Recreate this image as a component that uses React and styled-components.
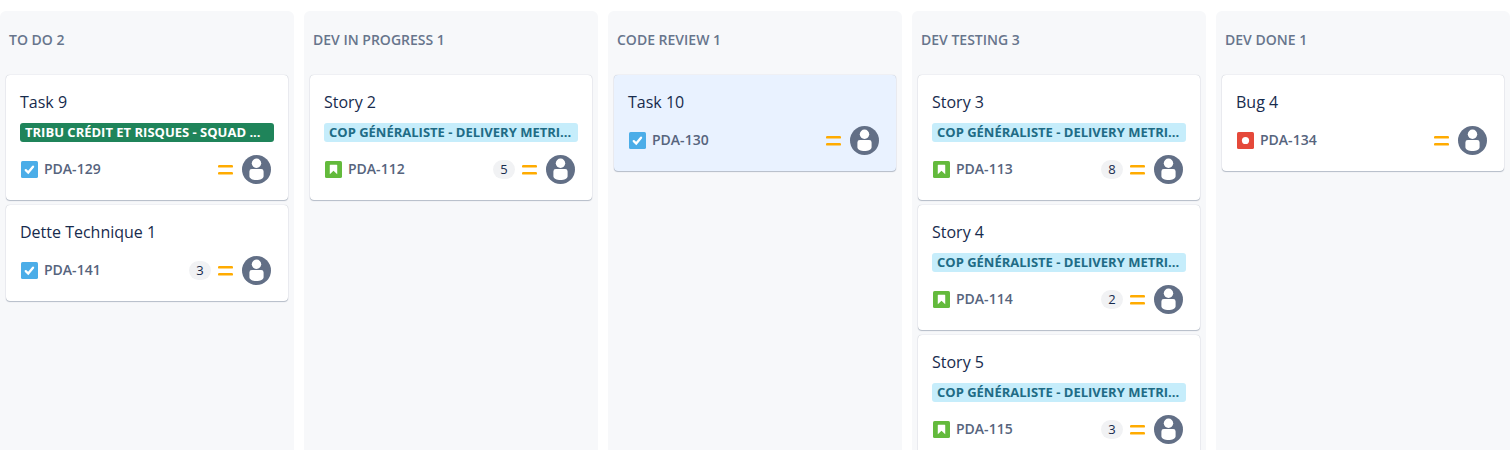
import React from "react";
import styled, { createGlobalStyle } from "styled-components";

const GlobalStyle = createGlobalStyle`
  *, *::before, *::after { box-sizing: border-box; }
  body {
    margin: 0;
    background: #ffffff;
    color: #172b4d;
    font-family: "Segoe UI", "Open Sans", "Noto Sans", sans-serif;
  }
  h2, h3, ul { margin: 0; padding: 0; }
  ul { list-style: none; }
`;

const Board = styled.main`
  display: grid;
  grid-template-columns: repeat(5, minmax(0, 1fr));
  gap: 10px;
  height: 100vh;
  padding-top: 11px;
  overflow: hidden;
`;

const Column = styled.section`
  padding: 0 6px 6px;
  border-radius: 6px 6px 0 0;
  background: #f7f8fa;
`;

const ColumnTitle = styled.h2`
  padding: 19px 3px 25px;
  font-size: 14px;
  line-height: 20px;
  font-weight: 600;
  color: #67758c;
  text-transform: uppercase;
  white-space: nowrap;
`;

const CardList = styled.ul`
  display: flex;
  flex-direction: column;
  gap: 5px;
`;

const Card = styled.li`
  display: flex;
  flex-direction: column;
  padding: 13px 14px 16px;
  border-radius: 4px;
  background: ${(p) => (p.$selected ? "#e9f2ff" : "#ffffff")};
  box-shadow: 0 1px 1px rgba(9, 30, 66, 0.25), 0 0 1px rgba(9, 30, 66, 0.31);
`;

const CardTitle = styled.h3`
  font-size: 16px;
  line-height: 28px;
  font-weight: 400;
`;

const Epic = styled.div`
  margin: 7px 0 3px;
  padding: 0 5px;
  border-radius: 3px;
  font-size: 13px;
  line-height: 19px;
  font-weight: 700;
  white-space: nowrap;
  overflow: hidden;
  background: ${(p) => (p.$tone === "green" ? "#1f845a" : "#c6edfb")};
  color: ${(p) => (p.$tone === "green" ? "#ffffff" : "#206b85")};
`;

const CardFooter = styled.div`
  display: flex;
  align-items: center;
  justify-content: space-between;
  margin-top: 10px;
  padding: 0 3px 0 1px;
`;

const Group = styled.div`
  display: flex;
  align-items: center;
  gap: ${(p) => p.$gap}px;
`;

const IssueKey = styled.a`
  padding-bottom: 2px;
  font-size: 14px;
  line-height: 20px;
  font-weight: 600;
  color: #56647d;
  text-decoration: none;
`;

const Points = styled.span`
  min-width: 22px;
  padding: 0 6px;
  border-radius: 10px;
  background: #f1f2f4;
  font-size: 13px;
  line-height: 19px;
  text-align: center;
`;

const Icon = styled.svg`
  display: block;
  flex: none;
`;

const TypeIcon = ({ type }) => (
  <Icon width="17" height="17" viewBox="0 0 16 16" role="img" aria-label={type}>
    {type === "task" && (
      <>
        <rect width="16" height="16" rx="1.500" fill="#4bade8" />
        <path d="M4.500 8.600 6.800 10.800 11.300 5.400" fill="none" stroke="#fff" strokeWidth="2.200" strokeLinecap="round" />
      </>
    )}
    {type === "story" && (
      <>
        <rect width="16" height="16" rx="1.500" fill="#63ba3c" />
        <path d="M5 3.500h6a.5.5 0 0 1 .5.5v8.500L8 9.200 4.500 12.500V4a.5.5 0 0 1 .5-.5Z" fill="#fff" />
      </>
    )}
    {type === "bug" && (
      <>
        <rect width="16" height="16" rx="1.500" fill="#e5493a" />
        <circle cx="8" cy="8" r="3.400" fill="#fff" />
      </>
    )}
  </Icon>
);

const PriorityIcon = () => (
  <Icon width="17" height="17" viewBox="0 0 17 17" role="img" aria-label="medium">
    <rect x="1" y="4" width="15" height="2.600" rx="1.200" fill="#ffab00" />
    <rect x="1" y="11" width="15" height="2.600" rx="1.200" fill="#ffab00" />
  </Icon>
);

const Avatar = () => (
  <Icon width="29" height="29" viewBox="0 0 29 29" role="img" aria-label="unassigned">
    <circle cx="14.5" cy="14.5" r="14.5" fill="#626f86" />
    <circle cx="14.5" cy="8.200" r="4.700" fill="#fff" />
    <path
      d="M9.800 14h9.400a2.400 2.400 0 0 1 2.400 2.400v4.800c0 2.200-3.400 3.900-7.100 3.900s-7.100-1.700-7.100-3.900v-4.800A2.400 2.400 0 0 1 9.800 14Z"
      fill="#fff"
    />
  </Icon>
);

const COP = { tone: "blue", label: "COP GÉNÉRALISTE - DELIVERY METRI..." };
const TRIBU = { tone: "green", label: "TRIBU CRÉDIT ET RISQUES - SQUAD ..." };

const columns = [
  {
    name: "To do",
    cards: [
      { title: "Task 9", id: "PDA-129", type: "task", epic: TRIBU },
      { title: "Dette Technique 1", id: "PDA-141", type: "task", points: 3 },
    ],
  },
  {
    name: "Dev in progress",
    cards: [{ title: "Story 2", id: "PDA-112", type: "story", epic: COP, points: 5 }],
  },
  {
    name: "Code review",
    cards: [{ title: "Task 10", id: "PDA-130", type: "task", selected: true }],
  },
  {
    name: "Dev testing",
    cards: [
      { title: "Story 3", id: "PDA-113", type: "story", epic: COP, points: 8 },
      { title: "Story 4", id: "PDA-114", type: "story", epic: COP, points: 2 },
      { title: "Story 5", id: "PDA-115", type: "story", epic: COP, points: 3 },
    ],
  },
  {
    name: "Dev done",
    cards: [{ title: "Bug 4", id: "PDA-134", type: "bug" }],
  },
];

const IssueCard = ({ card }) => (
  <Card $selected={card.selected}>
    <CardTitle>{card.title}</CardTitle>
    {card.epic && <Epic $tone={card.epic.tone}>{card.epic.label}</Epic>}
    <CardFooter>
      <Group $gap={6}>
        <TypeIcon type={card.type} />
        <IssueKey href={`#${card.id}`}>{card.id}</IssueKey>
      </Group>
      <Group $gap={8}>
        <Group $gap={6}>
          {card.points && <Points>{card.points}</Points>}
          <PriorityIcon />
        </Group>
        <Avatar />
      </Group>
    </CardFooter>
  </Card>
);

export default function App() {
  return (
    <>
      <GlobalStyle />
      <Board>
        {columns.map((column) => (
          <Column key={column.name}>
            <ColumnTitle>
              {column.name} {column.cards.length}
            </ColumnTitle>
            <CardList>
              {column.cards.map((card) => (
                <IssueCard key={card.id} card={card} />
              ))}
            </CardList>
          </Column>
        ))}
      </Board>
    </>
  );
}
